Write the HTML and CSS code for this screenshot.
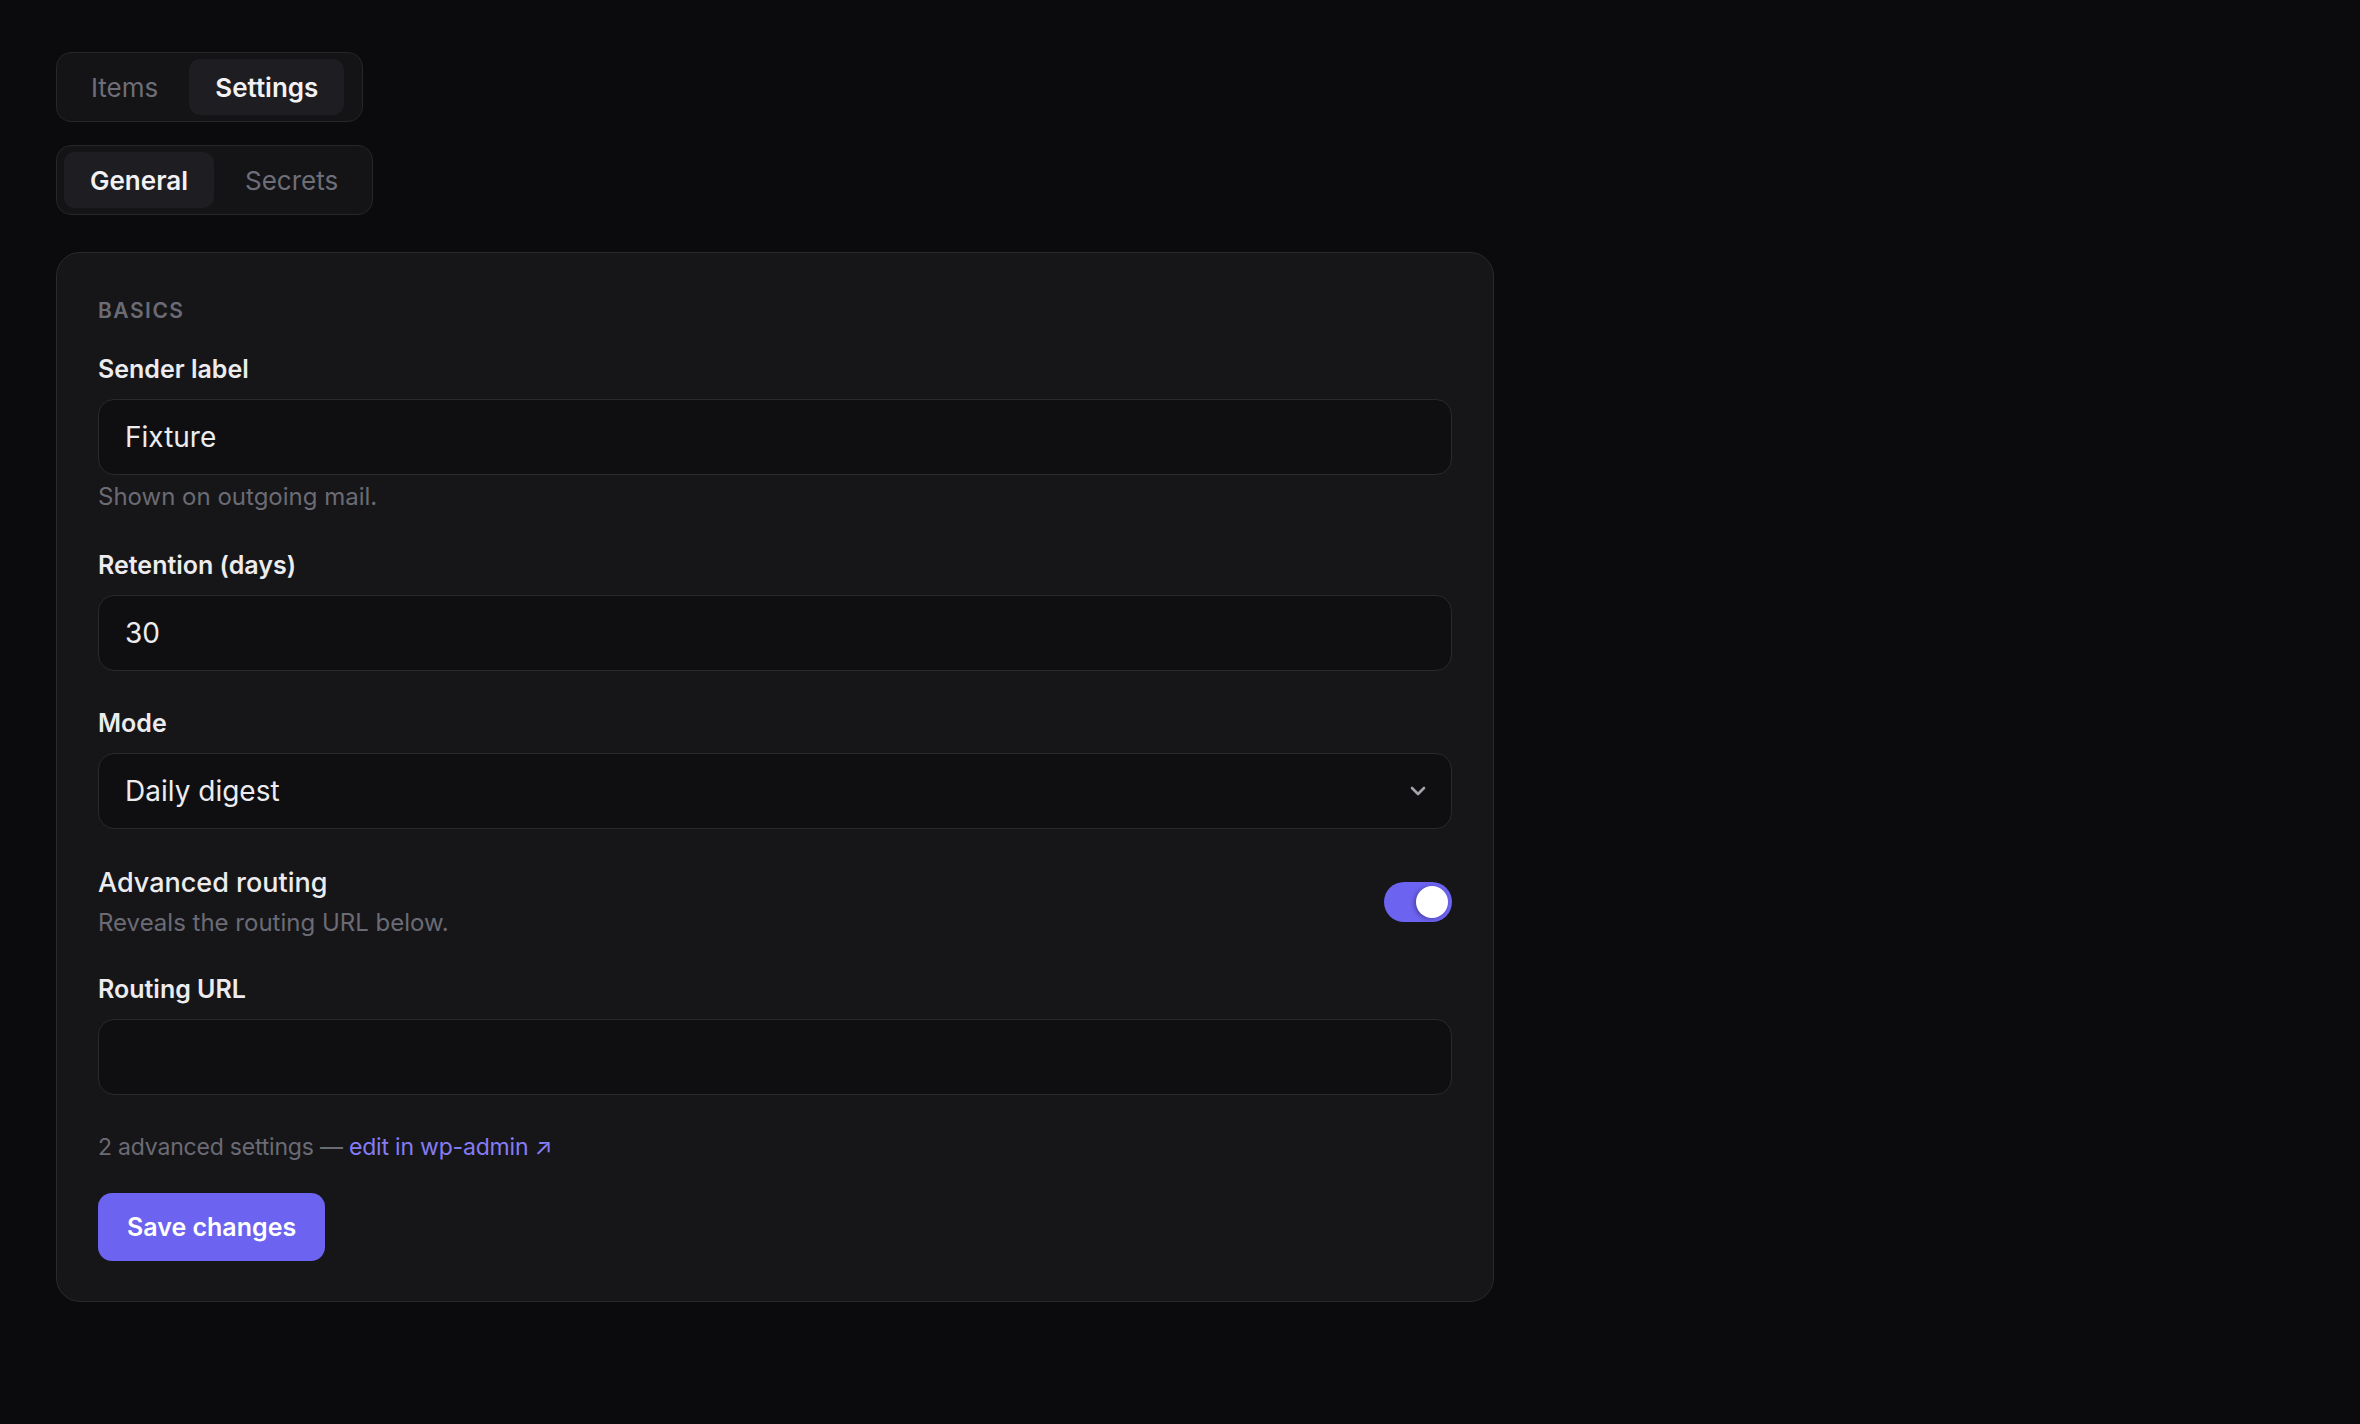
FILE: index.html
```html
<!DOCTYPE html>
<html lang="en">
<head>
    <meta charset="UTF-8">
    <meta name="viewport" content="width=device-width, initial-scale=1.0">
    <title>Settings</title>
    <link rel="stylesheet" href="styles.css">
</head>
<body>
    <div class="page">
        <div class="tabs tabs-main">
            <button class="tab">Items</button>
            <button class="tab active">Settings</button>
        </div>

        <div class="tabs">
            <button class="tab active">General</button>
            <button class="tab">Secrets</button>
        </div>

        <form class="card">
            <div class="section-title">Basics</div>

            <div class="field">
                <label for="sender">Sender label</label>
                <input type="text" id="sender" value="Fixture">
                <div class="hint">Shown on outgoing mail.</div>
            </div>

            <div class="field">
                <label for="retention">Retention (days)</label>
                <input type="text" id="retention" value="30">
            </div>

            <div class="field">
                <label for="mode">Mode</label>
                <div class="select-wrap">
                    <select id="mode">
                        <option>Daily digest</option>
                        <option>Instant</option>
                        <option>Weekly digest</option>
                    </select>
                    <svg class="chevron" width="16" height="10" viewBox="0 0 16 10">
                        <path d="M2 2l6 6 6-6" fill="none" stroke="#a3a3ab" stroke-width="2.6" stroke-linecap="round" stroke-linejoin="round"/>
                    </svg>
                </div>
            </div>

            <div class="toggle-row">
                <div>
                    <div class="toggle-title">Advanced routing</div>
                    <div class="toggle-sub">Reveals the routing URL below.</div>
                </div>
                <label class="switch">
                    <input type="checkbox" checked>
                    <span class="knob"></span>
                </label>
            </div>

            <div class="field">
                <label for="url">Routing URL</label>
                <input type="text" id="url" value="">
            </div>

            <div class="footnote">2 advanced settings — <a href="#">edit in wp-admin ↗</a></div>

            <button type="submit" class="save">Save changes</button>
        </form>
    </div>
</body>
</html>
```

FILE: styles.css
```css
body {
    margin: 0;
    background-color: #0b0b0d;
    font-family: Inter, "Noto Sans", sans-serif;
    color: #ececef;
}
.page {
    display: flex;
    flex-direction: column;
    align-items: flex-start;
    padding: 52px 56px;
}
.tabs {
    display: inline-flex;
    gap: 4px;
    padding: 6px 7px;
    border: 1px solid #26262b;
    border-radius: 15px;
    background-color: #141417;
}
.tabs-main {
    padding-right: 18px;
    margin-bottom: 23px;
}
.tab {
    height: 56px;
    padding: 0 27px;
    border: none;
    border-radius: 11px;
    background: transparent;
    font-family: inherit;
    font-size: 26px;
    color: #6e6e78;
    cursor: pointer;
}
.tab.active {
    padding: 0 26px;
    background-color: #1e1e22;
    color: #f2f2f4;
    font-weight: 600;
}
.card {
    box-sizing: border-box;
    width: 1438px;
    margin-top: 37px;
    padding: 41px 41px 40px;
    border: 1px solid #2a2a2e;
    border-radius: 24px;
    background-color: #161618;
}
.section-title {
    font-size: 21px;
    font-weight: 600;
    letter-spacing: 1.5px;
    line-height: 33px;
    text-transform: uppercase;
    color: #6b6b75;
    margin-bottom: 24px;
}
.field {
    margin-bottom: 34px;
}
label {
    display: block;
    font-size: 25px;
    font-weight: 600;
    line-height: 36px;
    margin-bottom: 12px;
}
input[type="text"],
select {
    box-sizing: border-box;
    width: 100%;
    height: 76px;
    padding: 0 26px;
    border: 1px solid #2a2a2e;
    border-radius: 16px;
    background-color: #0f0f12;
    font-family: inherit;
    font-size: 28px;
    color: #ececef;
    outline: none;
}
select {
    appearance: none;
    -webkit-appearance: none;
}
.select-wrap {
    position: relative;
}
.chevron {
    position: absolute;
    right: 26px;
    top: 33px;
}
.hint,
.toggle-sub,
.footnote {
    font-size: 24px;
    line-height: 36px;
    color: #6b6b75;
}
.hint {
    margin-top: 4px;
    margin-bottom: -2px;
}
.toggle-row {
    display: flex;
    align-items: center;
    justify-content: space-between;
    margin-bottom: 30px;
}
.toggle-title {
    font-size: 27px;
    font-weight: 500;
    line-height: 40px;
}
.toggle-sub {
    margin-top: 2px;
}
.switch {
    position: relative;
    width: 68px;
    height: 40px;
    margin: 0;
}
.switch input {
    display: none;
}
.switch .knob {
    position: absolute;
    inset: 0;
    border-radius: 20px;
    background-color: #6c63f0;
}
.switch .knob::after {
    content: "";
    position: absolute;
    top: 4px;
    right: 4px;
    width: 32px;
    height: 32px;
    border-radius: 50%;
    background-color: #fff;
    box-shadow: -2px 1px 4px rgba(0, 0, 0, 0.3);
}
.footnote {
    font-size: 23px;
    letter-spacing: -0.2px;
    margin-bottom: 28px;
}
.footnote a {
    color: #857cf5;
    text-decoration: none;
}
.save {
    height: 68px;
    padding: 0 29px;
    border: none;
    border-radius: 14px;
    background-color: #6c63f0;
    color: #fff;
    font-family: inherit;
    font-size: 25px;
    font-weight: 600;
    cursor: pointer;
}
```
